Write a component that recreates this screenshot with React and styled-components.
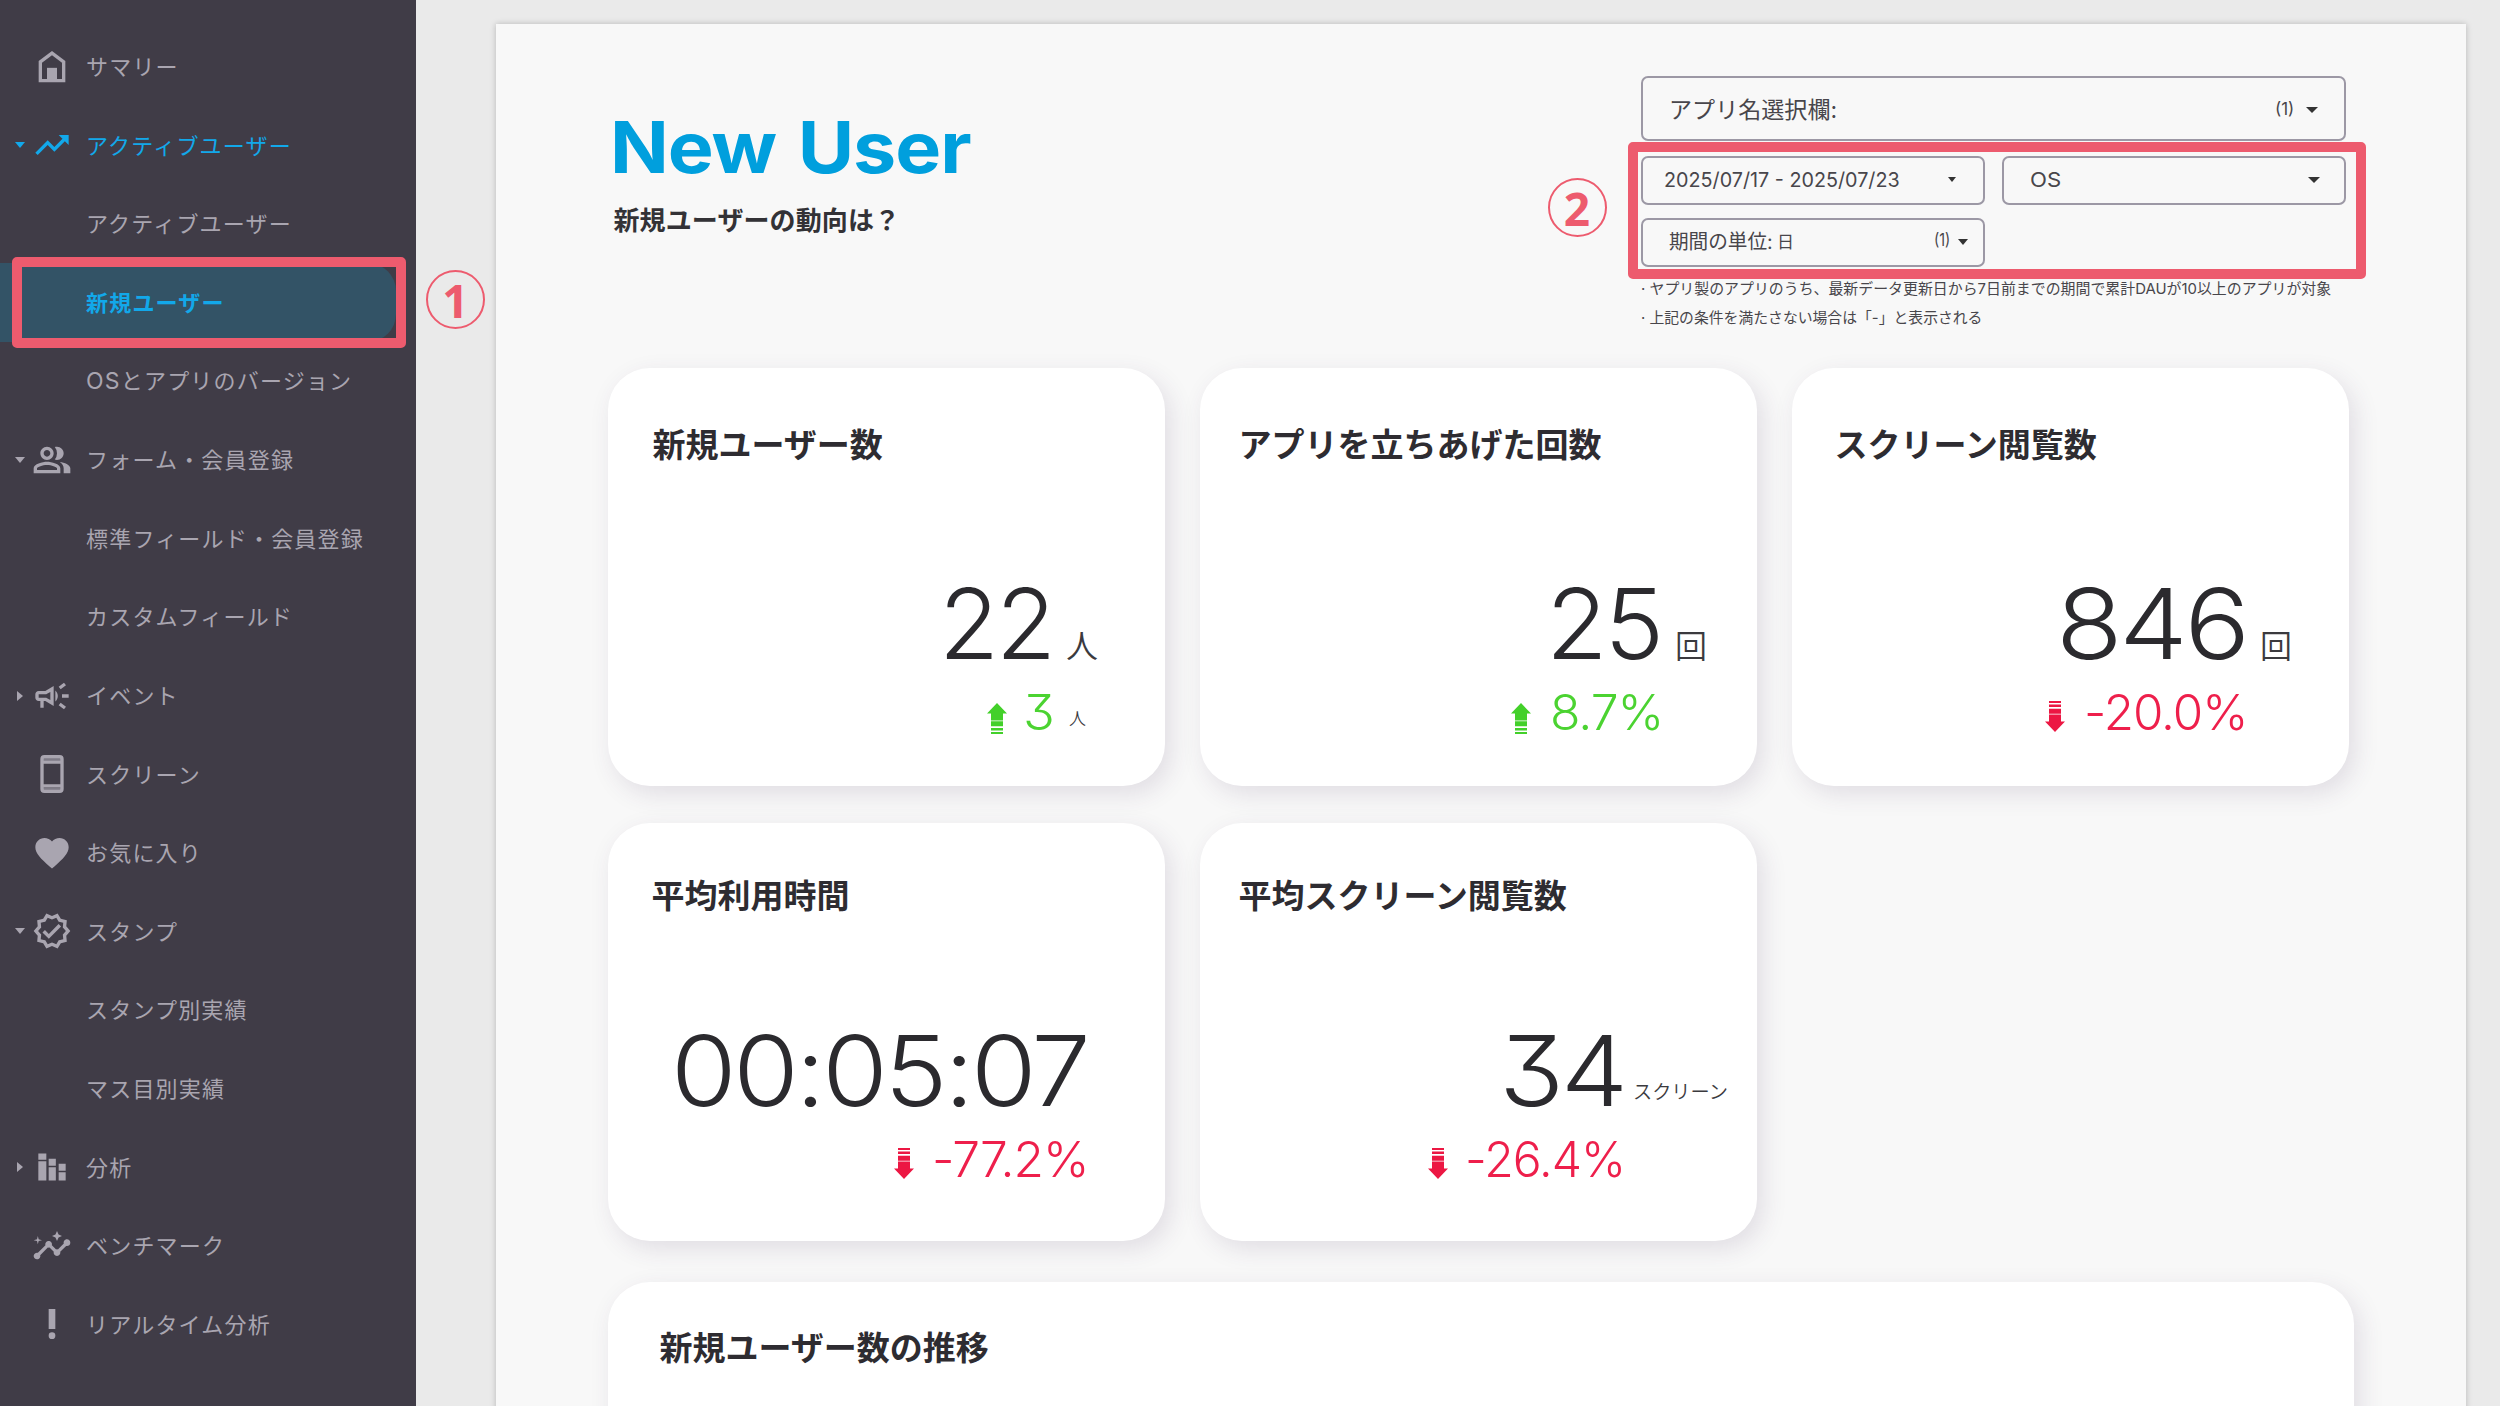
import React, { useLayoutEffect, useRef, useState } from "react";
import styled, { createGlobalStyle, css } from "styled-components";
import {
  MdTrendingUp,
  MdOutlinePeopleAlt,
  MdOutlineCampaign,
  MdFavorite,
  MdOutlineVerified,
  MdInsights,
  MdPriorityHigh,
} from "react-icons/md";

const JP = `"Noto Sans CJK JP", sans-serif`;
const LATIN = `Inter, "Noto Sans CJK JP", sans-serif`;
const ACCENT = "#ed5b6e";

const GlobalStyle = createGlobalStyle`
  * { box-sizing: border-box; }
  body { margin: 0; background: #eaeaea; overflow: hidden; font-family: ${JP}; }
`;

const Page = styled.div`
  display: flex;
  width: 2500px;
  height: 1406px;
  overflow: hidden;
  background: #eaeaea;
`;

/* ---------- text stretched to a fixed advance width ---------- */
const FitBox = styled.span`
  display: block;
  flex: none;
  width: ${(p) => p.$w}px;
  white-space: nowrap;
`;
const FitInner = styled.span`
  display: inline-block;
  transform-origin: 0 50%;
`;
function Fit({ w, children }) {
  const ref = useRef(null);
  const [scale, setScale] = useState(1);
  useLayoutEffect(() => {
    const natural = ref.current.offsetWidth;
    if (natural) setScale(w / natural);
  }, [w]);
  return (
    <FitBox $w={w}>
      <FitInner ref={ref} style={{ transform: `scaleX(${scale})` }}>
        {children}
      </FitInner>
    </FitBox>
  );
}

/* ---------- sidebar ---------- */
const Sidebar = styled.nav`
  flex: none;
  width: 416px;
  height: 100%;
  padding-top: 27.5px;
  background: #403c47;
`;
const NavRow = styled.div`
  display: flex;
  align-items: center;
  width: 396px;
  height: 78.6px;
  color: ${(p) => (p.$on ? "#12a8ea" : "#a9a5b0")};
  ${(p) =>
    p.$selected &&
    css`
      background: #335366;
      border-radius: 0 28px 28px 0;
      font-weight: 700;
    `}
`;
const CaretSlot = styled.span`
  display: flex;
  justify-content: center;
  width: 20px;
  margin-left: 10px;
`;
const Caret = styled.span`
  width: 0;
  height: 0;
  border: 5px solid transparent;
  ${(p) =>
    p.$dir === "right"
      ? css`
          border-left: 6px solid currentColor;
          border-right: 0;
        `
      : css`
          border-top: ${p.$h || 6}px solid currentColor;
          border-bottom: 0;
          border-left-width: ${p.$half || 5}px;
          border-right-width: ${p.$half || 5}px;
        `}
`;
const IconSlot = styled.span`
  display: flex;
  justify-content: center;
  width: 44px;
  margin-right: 12px;
  svg {
    width: 40px;
    height: 40px;
  }
`;
const NavLabel = styled.span`
  padding-bottom: 3px;
  font-size: 22px;
  letter-spacing: 1.2px;
  line-height: 30px;
  white-space: nowrap;
`;
const NavLatin = styled.span`
  font-family: ${LATIN};
  font-size: 23px;
`;
const Highlight = styled.div`
  position: absolute;
  left: ${(p) => p.$x}px;
  top: ${(p) => p.$y}px;
  width: ${(p) => p.$w}px;
  height: ${(p) => p.$h}px;
  border: 10.5px solid ${ACCENT};
  border-radius: 5px;
`;
const Marker = styled.div`
  position: absolute;
  left: ${(p) => p.$x}px;
  top: ${(p) => p.$y}px;
  display: flex;
  align-items: center;
  justify-content: center;
  width: 59px;
  height: 59px;
  border: 2.5px solid ${ACCENT};
  border-radius: 50%;
  color: ${ACCENT};
  font: 700 46px/1 "Noto Sans", sans-serif;
`;

const HomeIcon = () => (
  <svg viewBox="0 0 24 24" fill="none">
    <path d="M5 20.2V8.9l7-5.2 7 5.2v11.3z" stroke="currentColor" strokeWidth="2" />
    <path d="M9 12.5h6v8H9z" fill="currentColor" />
  </svg>
);
const PhoneIcon = () => (
  <svg viewBox="0 0 24 24" fill="none" stroke="currentColor">
    <rect x="6" y="1.6" width="12" height="20.8" rx="1.4" strokeWidth="2" />
    <path d="M6.5 4.9h11M6.5 19.1h11" strokeWidth="1.8" />
    <path d="M6.5 3.2h11M6.5 21h11" strokeWidth="2" strokeOpacity="0.6" />
  </svg>
);
const StackedBarsIcon = () => (
  <svg viewBox="0 0 24 24" fill="currentColor">
    <path d="M3.8 3.9h4.8v3.8H3.8zM3.8 8.5h4.8v11.6H3.8zM10 7.1h4.3v4.2H10zM10 12.1h4.3v8H10zM16 10.1h4.2v4.2H16zM16 15.1h4.2v5H16z" />
  </svg>
);

const NAV = [
  { label: "サマリー", icon: HomeIcon },
  { label: "アクティブユーザー", icon: MdTrendingUp, caret: "down", on: true },
  { label: "アクティブユーザー" },
  { label: "新規ユーザー", on: true, selected: true },
  { latin: "OS", label: "とアプリのバージョン" },
  { label: "フォーム・会員登録", icon: MdOutlinePeopleAlt, caret: "down" },
  { label: "標準フィールド・会員登録" },
  { label: "カスタムフィールド" },
  { label: "イベント", icon: MdOutlineCampaign, caret: "right" },
  { label: "スクリーン", icon: PhoneIcon },
  { label: "お気に入り", icon: MdFavorite },
  { label: "スタンプ", icon: MdOutlineVerified, caret: "down" },
  { label: "スタンプ別実績" },
  { label: "マス目別実績" },
  { label: "分析", icon: StackedBarsIcon, caret: "right" },
  { label: "ベンチマーク", icon: MdInsights },
  { label: "リアルタイム分析", icon: MdPriorityHigh },
];

/* ---------- report sheet ---------- */
const Sheet = styled.main`
  flex: none;
  width: 1970px;
  height: 1400px;
  margin: 24px 0 0 80px;
  padding: 52px 0 0 111.5px;
  background: #f8f8f8;
  box-shadow: 0 0 6px rgba(0, 0, 0, 0.22);
`;
const Header = styled.header`
  display: flex;
  justify-content: space-between;
  width: 1738.5px;
  height: 292px;
`;
const TitleBlock = styled.div`
  padding: 26px 0 0 2px;
`;
const Title = styled.h1`
  margin: 0;
  color: #009fdd;
  font: 700 71px/90px ${LATIN};
  letter-spacing: -1px;
  word-spacing: 4px;
`;
const Subtitle = styled.p`
  margin: 9px 0 0 4px;
  color: #333236;
  font: 700 26px/36px ${JP};
  letter-spacing: 0.1px;
`;
const Filters = styled.div`
  width: 705px;
`;
const FilterGrid = styled.div`
  display: grid;
  grid-template-columns: 344px 344px;
  gap: 13px 17px;
  margin-top: 15px;
`;
const Select = styled.div`
  display: flex;
  align-items: center;
  height: ${(p) => p.$h || 49}px;
  padding: ${(p) => p.$pt || 0}px ${(p) => p.$pr}px ${(p) => p.$pb || 0}px
    ${(p) => p.$pl}px;
  border: 2px solid #9c98a5;
  border-radius: 7px;
  background: #f8f8f8;
  color: #48464b;
  font: 400 ${(p) => p.$size || 20}px/30px ${LATIN};
`;
const Spacer = styled.span`
  flex: 1;
`;
const SelectCaret = styled(Caret)`
  margin-left: ${(p) => p.$gap || 0}px;
  color: #333;
`;
const Small = styled.span`
  margin-left: ${(p) => p.$ml || 0}px;
  font-size: 17px;
`;
const Count = styled(Small)`
  padding-bottom: 3px;
`;
const Notes = styled.div`
  margin-top: 8px;
  color: #48464b;
  font: 400 15px/28.5px ${LATIN};
`;

const Cards = styled.section`
  display: grid;
  grid-template-columns: repeat(3, 557px);
  grid-auto-rows: 418px;
  gap: 37px 35px;
`;
const shell = css`
  background: #fff;
  box-shadow: 6px 8px 24px rgba(70, 50, 90, 0.13);
`;
const Card = styled.article`
  ${shell}
  border-radius: 42px;
  padding-top: ${(p) => (p.$second ? 47 : 50.5)}px;
`;
const CardTitle = styled.h2`
  margin: 0 0 0 ${(p) => p.$ml}px;
  color: #2e2c31;
  font: 700 33px/48px ${JP};
`;
const Figure = styled.div`
  display: flex;
  align-items: center;
  height: 100px;
  margin-top: ${(p) => (p.$second ? 103 : 107.5)}px;
  color: #2b2a2e;
  font: 350 97px/100px ${LATIN};
  font-feature-settings: "cv09", "calt" 0;
  letter-spacing: -3px;
`;
const Unit = styled.span`
  margin: ${(p) => p.$mt}px 0 0 ${(p) => p.$ml}px;
  font: 350 ${(p) => p.$size}px/1.2 ${JP};
  letter-spacing: 0;
  color: #3b3a3e;
`;
const Change = styled.div`
  display: flex;
  align-items: center;
  height: 50px;
  margin-top: 14px;
  color: ${(p) => (p.$up ? "#4bd331" : "#ee1f4b")};
  font: 330 49px/50px ${LATIN};
  font-feature-settings: "cv09", "calt" 0;
  letter-spacing: -1px;
`;
const Pad = styled.span`
  flex: none;
  width: ${(p) => p.$w}px;
`;
const ArrowSvg = styled.svg`
  flex: none;
  width: 20px;
  height: 31px;
  margin-top: ${(p) => (p.$up ? 11 : 7)}px;
  transform: ${(p) => (p.$up ? "none" : "rotate(180deg)")};
  fill: ${(p) => (p.$up ? "#43d02a" : "#ec1743")};
`;
const Arrow = ({ up }) => (
  <ArrowSvg $up={up} viewBox="0 0 20 31">
    <path d="M10 0L20 10.5H16V17H4V10.5H0zM4 18.6h12v4.6H4zM4 24.9h12v2.5H4zM4 29h12v2H4z" />
    <path d="M4 16h12v3H4z" fillOpacity="0.5" />
  </ArrowSvg>
);
const WideCard = styled.section`
  ${shell}
  width: 1746px;
  height: 300px;
  margin-top: 41px;
  border-radius: 42px;
  padding-top: 39.5px;
`;

const CARDS = [
  { x: 607.5, title: "新規ユーザー数", tml: 45, value: "22", vx: 939, vw: 114, unit: "人", ux: 1066, us: 32, umt: 41, up: true, ax: 987, change: "3", cx: 1023, cw: 31, cu: "人", cux: 1069 },
  { x: 1199.5, title: "アプリを立ちあげた回数", tml: 39, value: "25", vx: 1546, vw: 115, unit: "回", ux: 1675, us: 32, umt: 41, up: true, ax: 1511, change: "8.7%", cx: 1550, cw: 113 },
  { x: 1791.5, title: "スクリーン閲覧数", tml: 43, value: "846", vx: 2056, vw: 191, unit: "回", ux: 2260, us: 32, umt: 41, ax: 2045, change: "-20.0%", cx: 2084, cw: 163 },
  { x: 607.5, title: "平均利用時間", tml: 44, value: "00:05:07", vx: 671, vw: 416, ax: 894, change: "-77.2%", cx: 932, cw: 157, second: true },
  { x: 1199.5, title: "平均スクリーン閲覧数", tml: 39, value: "34", vx: 1499, vw: 126, unit: "スクリーン", ux: 1633, us: 19.2, umt: 41, ax: 1428, change: "-26.4%", cx: 1465, cw: 160, second: true },
];

export default function App() {
  return (
    <Page>
      <GlobalStyle />
      <Sidebar>
        {NAV.map((n, i) => {
          const Icon = n.icon;
          return (
            <NavRow key={i} $on={n.on} $selected={n.selected}>
              <CaretSlot>{n.caret && <Caret $dir={n.caret} />}</CaretSlot>
              <IconSlot>{Icon && <Icon />}</IconSlot>
              <NavLabel>
                {n.latin && <NavLatin>{n.latin}</NavLatin>}
                {n.label}
              </NavLabel>
            </NavRow>
          );
        })}
      </Sidebar>

      <Sheet>
        <Header>
          <TitleBlock>
            <Title>
              <Fit w={361}>New User</Fit>
            </Title>
            <Subtitle>新規ユーザーの動向は？</Subtitle>
          </TitleBlock>
          <Filters>
            <Select $h={65} $pl={26} $pr={26} $pt={3} $size={22.8}>
              <Fit w={168}>アプリ名選択欄:</Fit>
              <Spacer />
              <Count>
                <Fit w={19}>(1)</Fit>
              </Count>
              <SelectCaret $half={6} $gap={12} />
            </Select>
            <FilterGrid>
              <Select $pl={21} $pr={27} $pb={2}>
                <Fit w={236}>2025/07/17 - 2025/07/23</Fit>
                <Spacer />
                <SelectCaret $half={4} $h={5} />
              </Select>
              <Select $pl={26} $pr={24} $pb={1}>
                <Fit w={31}>OS</Fit>
                <Spacer />
                <SelectCaret $half={6} />
              </Select>
              <Select $pl={26} $pr={15} $pb={2}>
                <Fit w={104}>期間の単位:</Fit>
                <Small $ml={4}>
                  <Fit w={17}>日</Fit>
                </Small>
                <Spacer />
                <Count>
                  <Fit w={16}>(1)</Fit>
                </Count>
                <SelectCaret $half={5.5} $gap={8} />
              </Select>
            </FilterGrid>
            <Notes>
              <Fit w={690}>
                · ヤプリ製のアプリのうち、最新データ更新日から7日前までの期間で累計DAUが10以上のアプリが対象
              </Fit>
              <Fit w={341}>· 上記の条件を満たさない場合は「-」と表示される</Fit>
            </Notes>
          </Filters>
        </Header>

        <Cards>
          {CARDS.map((c) => (
            <Card key={c.title} $second={c.second}>
              <CardTitle $ml={c.tml}>{c.title}</CardTitle>
              <Figure $second={c.second}>
                <Pad $w={c.vx - c.x} />
                <Fit w={c.vw}>{c.value}</Fit>
                {c.unit && (
                  <Unit $size={c.us} $mt={c.umt} $ml={c.ux - c.vx - c.vw}>
                    {c.unit}
                  </Unit>
                )}
              </Figure>
              <Change $up={c.up}>
                <Pad $w={c.ax - c.x} />
                <Arrow up={c.up} />
                <Pad $w={c.cx - c.ax - 20} />
                <Fit w={c.cw}>{c.change}</Fit>
                {c.cu && (
                  <Unit $size={17} $mt={11} $ml={c.cux - c.cx - c.cw}>
                    {c.cu}
                  </Unit>
                )}
              </Change>
            </Card>
          ))}
        </Cards>

        <WideCard>
          <CardTitle $ml={52}>新規ユーザー数の推移</CardTitle>
        </WideCard>
      </Sheet>

      <Highlight $x={12} $y={257} $w={394} $h={91} />
      <Marker $x={426} $y={270}>1</Marker>
      <Highlight $x={1627.5} $y={142} $w={738.5} $h={137} />
      <Marker $x={1547.5} $y={178}>2</Marker>
    </Page>
  );
}
